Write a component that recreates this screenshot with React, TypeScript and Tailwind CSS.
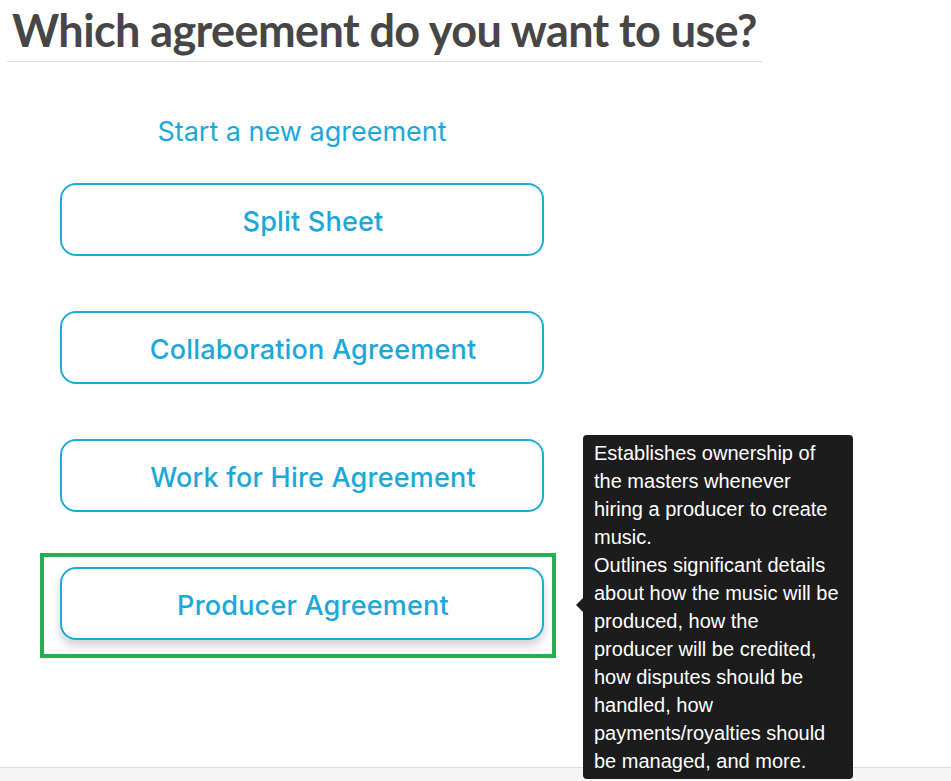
import React from "react";

const buttons = [
  "Split Sheet",
  "Collaboration Agreement",
  "Work for Hire Agreement",
  "Producer Agreement",
];

const btn =
  "h-[73px] rounded-[16px] border-2 border-[#1eaad9] flex items-center justify-center pl-[22px] pt-[5px] text-[27px] font-medium tracking-[0.2px] text-[#1ba8d9]";

export default function App() {
  return (
    <div className="relative w-[951px] h-[781px] overflow-hidden bg-white flex flex-col">
      <div className="flex-1">
        <div className="ml-[7px] w-[755px] border-b border-[#dddddd] h-[62px] flex items-center">
          <h1
            className="pl-[5px] text-[45px] font-bold text-[#464646] leading-none tracking-[-0.6px] whitespace-nowrap"
            style={{ fontFamily: "Lato, 'Noto Sans', sans-serif" }}
          >
            Which agreement do you want to use?
          </h1>
        </div>
        <div
          className="ml-[60px] w-[484px] flex flex-col"
          style={{ fontFamily: "Inter, 'Noto Sans', sans-serif" }}
        >
          <div className="mt-[53px] h-[34px] flex items-center justify-center text-[27px] text-[#1ba8d9]">
            Start a new agreement
          </div>
          <div className="mt-[34px] flex flex-col gap-[55px]">
            {buttons.map((b, i) =>
              i === 3 ? (
                <div
                  key={b}
                  className="-ml-[20px] -mr-[12px] -mt-[14px] border-4 border-[#22b14c] pl-[16px] pr-[8px] pt-[10px] pb-[14px]"
                >
                  <div className={btn + " bg-white shadow-[0_6px_10px_rgba(0,0,0,0.18)]"}>{b}</div>
                </div>
              ) : (
                <div key={b} className={btn}>
                  {b}
                </div>
              )
            )}
          </div>
        </div>
      </div>
      <div className="h-[14px] border-t border-[#dddddd] bg-[#f5f5f5]" />
      <div
        className="absolute left-[583px] top-[435px] w-[270px] rounded-[4px] bg-[#1c1c1c] text-white text-[20px] leading-[28px] pl-[11px] pr-[13px] pt-[4px] pb-[4px]"
        style={{ fontFamily: "'Liberation Sans', Arial, sans-serif" }}
      >
        <div className="absolute left-[-7px] top-[163px] w-0 h-0 border-y-[7px] border-y-transparent border-r-[7px] border-r-[#1c1c1c]" />
        Establishes ownership of the masters whenever hiring a producer to create music.
        <br />
        Outlines significant details about how the music will be produced, how the producer will be credited, how disputes should be handled, how payments/royalties should be managed, and more.
      </div>
    </div>
  );
}
